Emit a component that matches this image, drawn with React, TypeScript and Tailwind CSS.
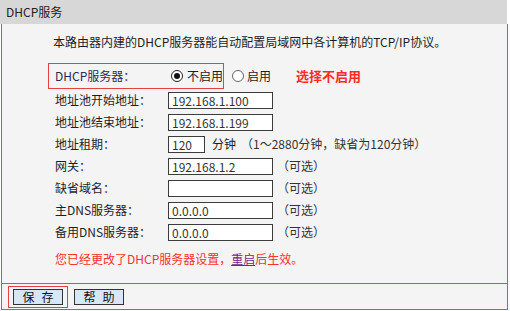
import React from 'react';

const Row = ({ label, children }: { label: string; children?: React.ReactNode }) => (
  <div className="flex h-[22px] items-center">
    <div className="w-[113px] shrink-0">{label}</div>
    {children}
  </div>
);

const Field = ({ value, w = 'w-[105px]' }: { value: string; w?: string }) => (
  <input
    readOnly
    defaultValue={value}
    className={`${w} h-[17px] border border-[#3c3c3c] bg-white px-[3px] text-[12px] leading-[15px] text-[#333] outline-none`}
  />
);

const Optional = () => <span className="ml-[4px] text-[#333]">（可选）</span>;

const Radio = ({ checked }: { checked?: boolean }) => (
  <span
    className={`flex h-[12px] w-[12px] items-center justify-center rounded-full border bg-white ${
      checked ? 'border-[#222]' : 'border-[#666]'
    }`}
  >
    {checked && <span className="h-[6px] w-[6px] rounded-full bg-[#111]" />}
  </span>
);

export default function App() {
  return (
    <div className="h-[311px] w-[510px] bg-white font-['Noto_Sans_CJK_SC',sans-serif] text-[12px] leading-[16px] text-[#1e1e1e]">
      {/* 标题栏 */}
      <div className="flex h-[24px] w-[507px] items-center bg-[#d7d7d7] pl-[6px] text-[#222]">
        DHCP服务
      </div>

      <div className="ml-[1px] w-[507px] border-x border-[#e84a4a] bg-[#f4f4f4]">
        <div className="h-[260px] border-b border-[#e84a4a]">
          <div className="h-[26px] pl-[51px] pt-[10px]">
            本路由器内建的DHCP服务器能自动配置局域网中各计算机的TCP/IP协议。
          </div>

          {/* DHCP服务器 开关 */}
          <div className="mt-[13px] flex h-[26px] items-center pl-[46px]">
            <div className="flex h-[26px] w-[176px] items-center border border-[#e84040] pl-[6px]">
              <div className="w-[113px] shrink-0 text-[#2a2a5a]">DHCP服务器：</div>
              <div className="ml-[3px] flex items-center gap-[4px]">
                <Radio checked />
                <span>不启用</span>
              </div>
            </div>
            <div className="ml-[8px] flex items-center gap-[3px]">
              <Radio />
              <span>启用</span>
            </div>
            <span className="ml-[25px] text-[13px] font-bold text-[#ff2a2a]">选择不启用</span>
          </div>

          {/* 地址设置 */}
          <div className="pl-[53px]">
            <Row label="地址池开始地址：">
              <Field value="192.168.1.100" />
            </Row>
            <Row label="地址池结束地址：">
              <Field value="192.168.1.199" />
            </Row>
            <Row label="地址租期：">
              <Field value="120" w="w-[37px]" />
              <span className="ml-[7px]">分钟</span>
              <span className="ml-[5px] text-[#333]">（1～2880分钟，缺省为120分钟）</span>
            </Row>
            <Row label="网关：">
              <Field value="192.168.1.2" />
              <Optional />
            </Row>
            <Row label="缺省域名：">
              <Field value="" />
              <Optional />
            </Row>
            <Row label="主DNS服务器：">
              <Field value="0.0.0.0" />
              <Optional />
            </Row>
            <Row label="备用DNS服务器：">
              <Field value="0.0.0.0" />
              <Optional />
            </Row>
            <div className="mt-[7px] flex h-[18px] items-center text-[#ff3030]">
              您已经更改了DHCP服务器设置，
              <span className="text-[#7a1f8a] underline">重启</span>
              后生效。
            </div>
          </div>
        </div>

        {/* 按钮栏 */}
        <div className="flex h-[26px] items-center border-b border-[#e84a4a] pl-[6px]">
          <div className="flex h-[22px] items-center border border-[#e84040] px-[4px]">
            <button className="h-[16px] w-[50px] border border-[#333] bg-[#d8e6fa] pl-[7px] text-[12px] leading-[14px] tracking-[7px] text-[#111]">
              保存
            </button>
          </div>
          <button className="ml-[6px] h-[16px] w-[50px] border border-[#333] bg-[#d8e6fa] pl-[7px] text-[12px] leading-[14px] tracking-[7px] text-[#111]">
            帮助
          </button>
        </div>
      </div>
    </div>
  );
}
